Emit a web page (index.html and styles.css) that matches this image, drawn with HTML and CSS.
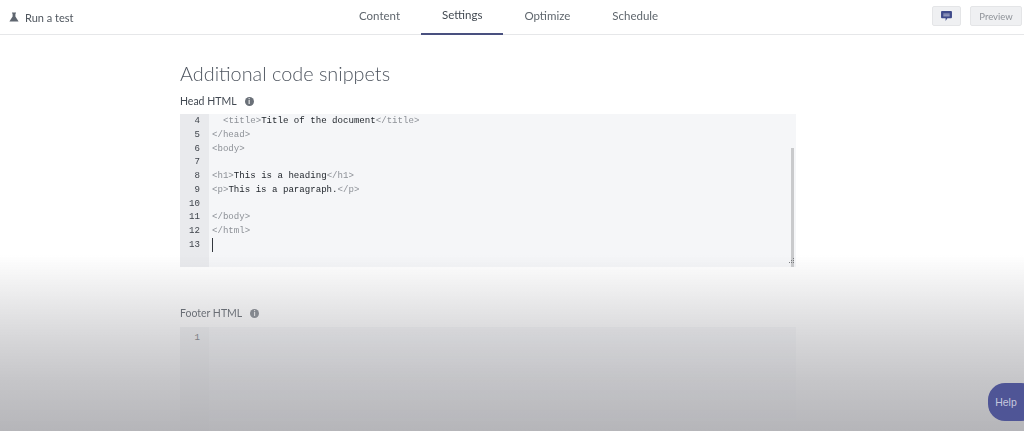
FILE: index.html
```html
<!DOCTYPE html>
<html lang="en">
<head>
<meta charset="utf-8">
<title>Additional code snippets</title>
<link rel="stylesheet" href="styles.css">
</head>
<body>
<div class="page">
  <header class="topbar">
    <div class="run-test">
      <svg class="flask" viewBox="0 0 10 10" width="10" height="10"><path d="M3 .5h4v1H6.4v3L9.6 9.5H.4L3.6 4.5v-3H3z" fill="#5f6670"/></svg>
      <span>Run a test</span>
    </div>
    <nav class="tabs">
      <a class="tab">Content</a>
      <a class="tab tab-active">Settings</a>
      <a class="tab">Optimize</a>
      <a class="tab">Schedule</a>
    </nav>
    <div class="actions">
      <button class="btn btn-icon">
        <svg viewBox="0 0 12 11" width="11" height="10"><path d="M1 0h10a1 1 0 0 1 1 1v6a1 1 0 0 1-1 1H7L5 11V8H1a1 1 0 0 1-1-1V1a1 1 0 0 1 1-1z" fill="#3f4a8a"/><path d="M2.5 3.4h7M2.5 5.3h7" stroke="#dfe1ea" stroke-width=".8"/></svg>
      </button>
      <button class="btn btn-preview">Preview</button>
    </div>
  </header>
  <main class="content">
    <h1 class="heading">Additional code snippets</h1>
    <div class="label">Head HTML <span class="info">i</span></div>
    <section class="editor editor-head">
      <div class="gutter">
        <span>4</span><span>5</span><span>6</span><span>7</span><span>8</span><span>9</span><span>10</span><span>11</span><span>12</span><span>13</span>
      </div>
      <div class="code">
        <div class="line">  <i>&lt;title&gt;</i>Title of the document<i>&lt;/title&gt;</i></div>
        <div class="line"><i>&lt;/head&gt;</i></div>
        <div class="line"><i>&lt;body&gt;</i></div>
        <div class="line"> </div>
        <div class="line"><i>&lt;h1&gt;</i>This is a heading<i>&lt;/h1&gt;</i></div>
        <div class="line"><i>&lt;p&gt;</i>This is a paragraph.<i>&lt;/p&gt;</i></div>
        <div class="line"> </div>
        <div class="line"><i>&lt;/body&gt;</i></div>
        <div class="line"><i>&lt;/html&gt;</i></div>
        <div class="line"><b class="caret"></b></div>
      </div>
      <div class="scrollbar"></div>
      <svg class="grip" viewBox="0 0 8 8" width="8" height="8"><path d="M6 1h1v1H6zM4 3h1v1H4zM6 3h1v1H6zM2 5h1v1H2zM4 5h1v1H4zM6 5h1v1H6z" fill="#77797c"/></svg>
    </section>
    <div class="label label-footer">Footer HTML <span class="info">i</span></div>
    <section class="editor editor-footer">
      <div class="gutter"><span>1</span></div>
      <div class="code"></div>
    </section>
  </main>
  <div class="fade"></div>
  <button class="help">Help</button>
</div>
</body>
</html>
```
FILE: styles.css
```css
* { box-sizing: border-box; }
html, body { margin: 0; height: 100%; }
body { background: #fff; font-family: Lato, "Liberation Sans", sans-serif; color: #5b626b; overflow: hidden; }
.page { position: relative; width: 1024px; height: 431px; overflow: hidden; filter: blur(.6px); }

.topbar { display: flex; align-items: center; height: 35px; padding: 0 2px 0 9px; border-bottom: 1px solid #e6e7e9; }
.run-test { display: flex; align-items: center; gap: 6px; width: 329px; font-size: 11px; color: #4f565e; }
.flask { display: block; }
.tabs { display: flex; align-self: flex-start; height: 35px; }
.tab { display: flex; align-items: center; padding: 0 21px 4px; font-size: 11.5px; color: #5f666d; }
.tab-active { color: #434a52; border-bottom: 2px solid #49507f; }
.actions { display: flex; gap: 9px; margin-left: auto; margin-bottom: 2px; }
.btn { height: 20px; border: 1px solid #e4e5e7; border-radius: 2px; background: #eff0f2; padding: 0; font-family: inherit; }
.btn-icon { display: flex; align-items: center; justify-content: center; width: 29px; }
.btn-preview { width: 52px; font-size: 9.5px; color: #8f9399; }

.content { width: 616px; margin-left: 180px; }
.heading { margin: 26px 0 0; font-size: 19.85px; line-height: 25px; font-weight: 300; color: #4f5660; }
.label { margin-top: 8px; height: 14px; font-size: 10.5px; line-height: 14px; color: #424952; display: flex; align-items: center; gap: 8px; }
.label-footer { margin-top: 39px; }
.info { display: inline-flex; align-items: center; justify-content: center; width: 9px; height: 9px; border-radius: 50%; background: #6a7078; color: #fff; font-size: 7px; font-weight: 700; line-height: 1; }

.editor { position: relative; display: flex; margin-top: 6px; background: #f5f6f8; font-family: "Liberation Mono", monospace; font-size: 9.1px; line-height: 13.78px; overflow: hidden; }
.editor-head { height: 153px; }
.editor-footer { height: 110px; margin-top: 7px; }
.gutter { display: flex; flex-direction: column; width: 29px; padding-right: 9px; background: #e9eaed; text-align: right; color: #3f444b; }
.editor-footer .gutter { padding-top: 4px; background: #eeeff1; }
.code { flex: 1; padding-left: 3px; color: #22272d; }
.line { height: 13.78px; white-space: pre; }
.line i { font-style: normal; color: #8d9197; }
.caret { display: inline-block; width: 1px; height: 14px; background: #33383e; vertical-align: top; }
.scrollbar { position: absolute; top: 34px; right: 2px; bottom: 0; width: 3px; background: #c9cacc; }
.grip { position: absolute; right: 1px; bottom: 2px; }

.fade { position: absolute; left: 0; right: 0; top: 255px; bottom: 0; background: linear-gradient(to bottom, rgba(178,178,182,0), rgba(178,178,182,.22) 20%, rgba(178,178,182,.53) 48%, rgba(178,178,182,.74) 71%, rgba(178,178,182,.96)); pointer-events: none; }
.help { position: absolute; left: 988px; top: 383px; width: 50px; height: 38px; border: 0; border-radius: 17px; background: #4f5596; color: #c6c8de; font-family: "Liberation Sans", sans-serif; font-size: 10.5px; padding: 0 14px 0 0; }
```
